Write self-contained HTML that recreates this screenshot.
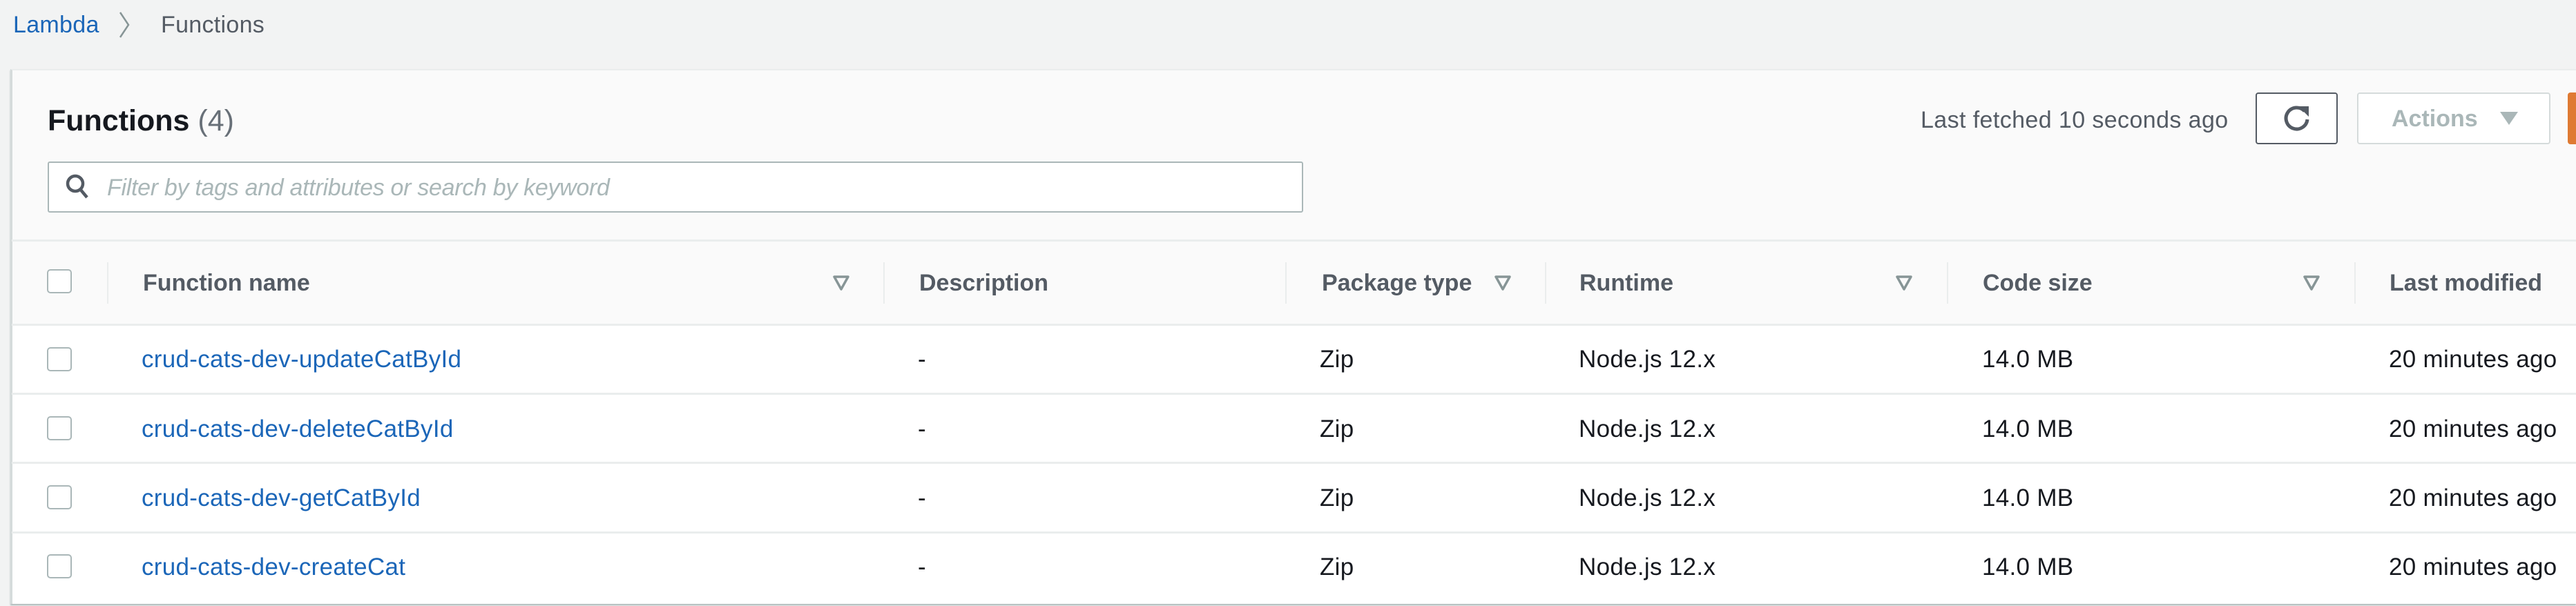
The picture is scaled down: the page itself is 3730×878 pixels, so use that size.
<!DOCTYPE html>
<html><head><meta charset="utf-8"><style>
*{margin:0;padding:0;box-sizing:border-box}
body{width:3730px;height:878px;background:#f2f3f3;font-family:"Liberation Sans",sans-serif;position:relative;overflow:hidden;color:#16191f}
.a{position:absolute;white-space:nowrap}
.t{font-size:35px;line-height:40px;letter-spacing:0.3px}
.h{font-size:34px;font-weight:bold;color:#545b64;line-height:40px}
.lnk{color:#1b66b8}
.cb{position:absolute;left:68px;width:36px;height:35px;border:2.5px solid #aab7b8;border-radius:5px;background:#fff}
.line{position:absolute;left:17px;right:0;height:3px;background:#eaeded}
.div{position:absolute;width:2px;height:60px;top:380px;background:#eaeded}
.fi{position:absolute;top:398px}
</style></head><body>
<div class="a t" style="left:19px;top:16px;color:#1b66b8;font-size:34px">Lambda</div>
<svg class="a" style="left:170px;top:14px" width="22" height="44"><path d="M4 4 L16 22 L4 40" fill="none" stroke="#879596" stroke-width="2.5"/></svg>
<div class="a t" style="left:233px;top:16px;color:#545b64;font-size:34px">Functions</div>

<div class="a" style="left:15px;top:100px;right:0;height:775px;background:#fafafa;border-left:3px solid #d5dbdb;border-top:2px solid #eaeded;box-shadow:0 2px 2px #aab7b8"></div>
<div class="a" style="left:18px;top:470px;right:0;height:404px;background:#fff"></div>

<div class="a" style="left:69px;top:150px;font-size:43px;font-weight:bold;line-height:50px">Functions <span style="font-weight:normal;color:#687078">(4)</span></div>
<div class="a t" style="left:2781px;top:154px;color:#545b64;font-size:34px;letter-spacing:0.4px">Last fetched 10 seconds ago</div>
<div class="a" style="left:3266px;top:134px;width:119px;height:75px;border:2px solid #545b64;border-radius:4px;background:#fff"></div>
<svg class="a" style="left:3300px;top:146px" width="52" height="52" viewBox="0 0 52 52"><path d="M37 15 A15.5 15.5 0 1 0 41 27" fill="none" stroke="#545b64" stroke-width="5"/><path d="M28 8 L43 8 L43 23 Z" fill="#545b64"/></svg>
<div class="a" style="left:3413px;top:134px;width:280px;height:75px;border:2px solid #d5dbdb;border-radius:4px;background:#fff"></div>
<div class="a" style="left:3463px;top:152px;font-size:34px;font-weight:bold;color:#aab7b8;line-height:40px">Actions</div>
<svg class="a" style="left:3620px;top:160px" width="26" height="22"><path d="M0 2 H26 L13 21Z" fill="#aab7b8"/></svg>
<div class="a" style="left:3718px;top:134px;width:30px;height:75px;background:#df7a33;border-radius:4px"></div>

<div class="a" style="left:69px;top:234px;width:1818px;height:74px;border:2px solid #aab7b8;border-radius:3px;background:#fff"></div>
<svg class="a" style="left:94px;top:251px" width="40" height="42" viewBox="0 0 40 42"><circle cx="15" cy="15" r="11" fill="none" stroke="#545b64" stroke-width="4.5"/><path d="M22 23 L32 35" stroke="#545b64" stroke-width="4.5"/></svg>
<div class="a" style="left:155px;top:252px;font-size:34px;font-style:italic;color:#aab7b8;line-height:40px;letter-spacing:-0.3px">Filter by tags and attributes or search by keyword</div>

<div class="line" style="top:347px"></div>
<div class="line" style="top:469px"></div>
<div class="line" style="top:569px"></div>
<div class="line" style="top:669px"></div>
<div class="line" style="top:770px"></div>

<div class="cb" style="top:390px"></div>
<div class="div" style="left:155px"></div>
<div class="div" style="left:1279px"></div>
<div class="div" style="left:1861px"></div>
<div class="div" style="left:2237px"></div>
<div class="div" style="left:2819px"></div>
<div class="div" style="left:3409px"></div>
<div class="a h" style="left:207px;top:390px">Function name</div>
<div class="a h" style="left:1331px;top:390px">Description</div>
<div class="a h" style="left:1914px;top:390px">Package type</div>
<div class="a h" style="left:2287px;top:390px">Runtime</div>
<div class="a h" style="left:2871px;top:390px">Code size</div>
<div class="a h" style="left:3460px;top:390px">Last modified</div>
<svg class="fi" style="left:1206px" width="24" height="24"><path d="M2 3 H22 L12 21Z" fill="none" stroke="#879596" stroke-width="3.5" stroke-linejoin="round"/></svg>
<svg class="fi" style="left:2164px" width="24" height="24"><path d="M2 3 H22 L12 21Z" fill="none" stroke="#879596" stroke-width="3.5" stroke-linejoin="round"/></svg>
<svg class="fi" style="left:2745px" width="24" height="24"><path d="M2 3 H22 L12 21Z" fill="none" stroke="#879596" stroke-width="3.5" stroke-linejoin="round"/></svg>
<svg class="fi" style="left:3335px" width="24" height="24"><path d="M2 3 H22 L12 21Z" fill="none" stroke="#879596" stroke-width="3.5" stroke-linejoin="round"/></svg>

<div class="cb" style="top:503px"></div>
<div class="a t lnk" style="left:205px;top:501px">crud-cats-dev-updateCatById</div>
<div class="a t" style="left:1329px;top:501px">-</div>
<div class="a t" style="left:1911px;top:501px">Zip</div>
<div class="a t" style="left:2286px;top:501px">Node.js 12.x</div>
<div class="a t" style="left:2870px;top:501px">14.0 MB</div>
<div class="a t" style="left:3459px;top:501px">20 minutes ago</div>

<div class="cb" style="top:603px"></div>
<div class="a t lnk" style="left:205px;top:602px">crud-cats-dev-deleteCatById</div>
<div class="a t" style="left:1329px;top:602px">-</div>
<div class="a t" style="left:1911px;top:602px">Zip</div>
<div class="a t" style="left:2286px;top:602px">Node.js 12.x</div>
<div class="a t" style="left:2870px;top:602px">14.0 MB</div>
<div class="a t" style="left:3459px;top:602px">20 minutes ago</div>

<div class="cb" style="top:703px"></div>
<div class="a t lnk" style="left:205px;top:702px">crud-cats-dev-getCatById</div>
<div class="a t" style="left:1329px;top:702px">-</div>
<div class="a t" style="left:1911px;top:702px">Zip</div>
<div class="a t" style="left:2286px;top:702px">Node.js 12.x</div>
<div class="a t" style="left:2870px;top:702px">14.0 MB</div>
<div class="a t" style="left:3459px;top:702px">20 minutes ago</div>

<div class="cb" style="top:803px"></div>
<div class="a t lnk" style="left:205px;top:802px">crud-cats-dev-createCat</div>
<div class="a t" style="left:1329px;top:802px">-</div>
<div class="a t" style="left:1911px;top:802px">Zip</div>
<div class="a t" style="left:2286px;top:802px">Node.js 12.x</div>
<div class="a t" style="left:2870px;top:802px">14.0 MB</div>
<div class="a t" style="left:3459px;top:802px">20 minutes ago</div>
</body></html>
